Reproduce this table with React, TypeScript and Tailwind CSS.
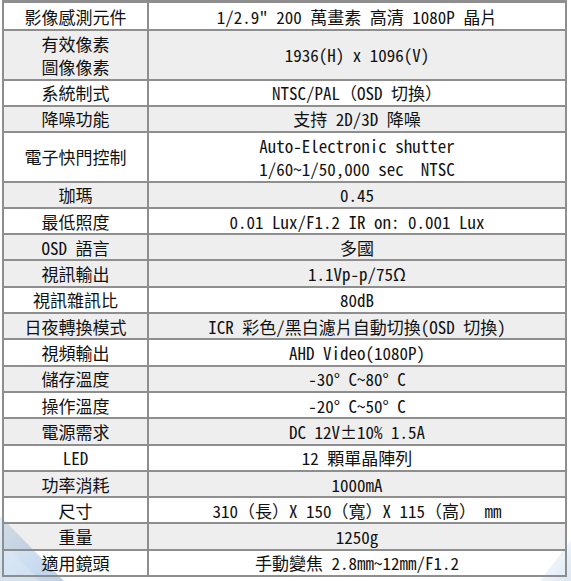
import React from "react"

type Row = {
  label: string[]
  value: string[]
  gray?: boolean
  tall?: boolean
}

const rows: Row[] = [
  { label: ["影像感測元件"], value: ["1/2.9\" 200 萬畫素 高清 1080P 晶片"] },
  { label: ["有效像素", "圖像像素"], value: ["1936(H) x 1096(V)"], gray: true, tall: true },
  { label: ["系統制式"], value: ["NTSC/PAL（OSD 切換）"] },
  { label: ["降噪功能"], value: ["支持 2D/3D 降噪"], gray: true },
  { label: ["電子快門控制"], value: ["Auto-Electronic shutter", "1/60~1/50,000 sec  NTSC"], tall: true },
  { label: ["珈瑪"], value: ["0.45"], gray: true },
  { label: ["最低照度"], value: ["0.01 Lux/F1.2 IR on: 0.001 Lux"] },
  { label: ["OSD 語言"], value: ["多國"], gray: true },
  { label: ["視訊輸出"], value: ["1.1Vp-p/75Ω"], gray: true },
  { label: ["視訊雜訊比"], value: ["80dB"] },
  { label: ["日夜轉換模式"], value: ["ICR 彩色/黑白濾片自動切換(OSD 切換)"], gray: true },
  { label: ["視頻輸出"], value: ["AHD Video(1080P)"] },
  { label: ["儲存溫度"], value: ["-30° C~80° C"], gray: true },
  { label: ["操作溫度"], value: ["-20° C~50° C"] },
  { label: ["電源需求"], value: ["DC 12V±10% 1.5A"], gray: true },
  { label: ["LED"], value: ["12 顆單晶陣列"] },
  { label: ["功率消耗"], value: ["1000mA"], gray: true },
  { label: ["尺寸"], value: ["310（長）X 150（寬）X 115（高） mm"] },
  { label: ["重量"], value: ["1250g"], gray: true },
  { label: ["適用鏡頭"], value: ["手動變焦 2.8mm~12mm/F1.2"] },
]

function SpecRow({ row, first }: { row: Row; first: boolean }) {
  // heights include the 2px top rule (border-box)
  const height = first ? "h-[26px]" : row.tall ? "h-[49.5px]" : "h-[26.3px]"
  return (
    <div
      className={`flex ${height} ${first ? "" : "border-t-2 border-[#8e8e8e]"} ${
        row.gray ? "bg-black/[0.065]" : ""
      }`}
    >
      <div className="w-[145px] shrink-0 border-r-2 border-[#8e8e8e] flex flex-col items-center justify-center">
        {row.label.map((t) => (
          <div key={t} className="whitespace-pre">{t}</div>
        ))}
      </div>
      <div className="flex-1 flex flex-col items-center justify-center">
        {row.value.map((t) => (
          <div key={t} className="whitespace-pre">{t}</div>
        ))}
      </div>
    </div>
  )
}

export default function App() {
  return (
    <div className="relative w-[571px] h-[581px] bg-white overflow-hidden">
      {/* faint blue backdrop peeking out at the bottom corners */}
      <svg className="absolute inset-0" width="571" height="581" viewBox="0 0 571 581">
        <defs>
          <linearGradient id="lb" x1="0" y1="0" x2="1" y2="1">
            <stop offset="0" stopColor="#e4eef9" />
            <stop offset="0.7" stopColor="#c6daef" />
            <stop offset="1" stopColor="#b9d1ea" />
          </linearGradient>
          <linearGradient id="rb" x1="0" y1="0" x2="1" y2="1">
            <stop offset="0" stopColor="#ffffff" />
            <stop offset="1" stopColor="#d3e2f2" />
          </linearGradient>
        </defs>
        <polygon points="0,516 64,581 0,581" fill="url(#lb)" />
        <polygon points="0,540 40,581 0,581" fill="#d9e6f4" opacity="0.6" />
        <polygon points="540,581 571,540 571,581" fill="url(#rb)" opacity="0.8" />
      </svg>

      <div
        className="relative ml-[2px] w-[565px] border-x-2 border-b-2 border-t-[3px] border-[#8e8e8e] text-[17px] leading-[23px] text-[#111]"
        style={{ fontFamily: '"Noto Sans Mono CJK TC", "Noto Sans CJK TC", sans-serif' }}
      >
        {rows.map((row, i) => (
          <SpecRow key={i} row={row} first={i === 0} />
        ))}
      </div>
    </div>
  )
}
